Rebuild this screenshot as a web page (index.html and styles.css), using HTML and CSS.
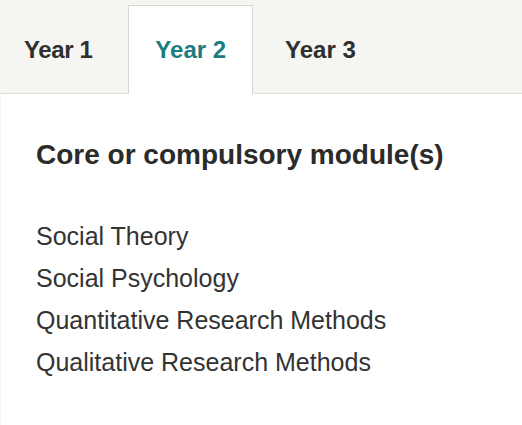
FILE: index.html
```html
<!DOCTYPE html>
<html lang="en">
<head>
<meta charset="utf-8">
<title>Modules</title>
<link rel="stylesheet" href="styles.css">
</head>
<body>
<div class="tabbar">
  <ul class="tabs">
    <li class="tab">Year 1</li>
    <li class="tab active">Year 2</li>
    <li class="tab">Year 3</li>
  </ul>
</div>
<div class="panel">
  <h2 class="heading">Core or compulsory module(s)</h2>
  <ul class="modules">
    <li>Social Theory</li>
    <li>Social Psychology</li>
    <li>Quantitative Research Methods</li>
    <li>Qualitative Research Methods</li>
  </ul>
</div>
</body>
</html>
```

FILE: styles.css
```css
html, body {
  margin: 0;
  padding: 0;
  background: #ffffff;
}
body {
  font-family: "Liberation Sans", Arial, Helvetica, sans-serif;
  color: #333333;
  width: 522px;
  height: 425px;
  overflow: hidden;
}
.tabbar {
  background: #f5f5f2;
  border-bottom: 1px solid #dcdcda;
  height: 93px;
}
.tabs {
  list-style: none;
  margin: 0;
  padding: 5px 0 0 0;
  display: flex;
  height: 88px;
}
.tab {
  display: flex;
  align-items: center;
  padding: 0 26px;
  margin-right: 6px;
  border: 1px solid transparent;
  border-bottom: 0;
  font-size: 24px;
  font-weight: bold;
  letter-spacing: 0;
  color: #2f2f2f;
  height: 88px;
  box-sizing: border-box;
}
.tab:first-child {
  padding-left: 23px;
  padding-right: 29px;
  letter-spacing: -0.4px;
}
.tab.active {
  background: #ffffff;
  border-color: #d6d6d4;
  color: #1b7d80;
  height: 89px;
  margin-bottom: -1px;
  margin-right: 5px;
}
.panel {
  padding: 0 35px;
  border-left: 1px solid #f6f6f4;
  height: 331px;
}
.heading {
  margin: 0;
  padding-top: 45px;
  font-size: 28px;
  line-height: 32px;
  font-weight: bold;
  color: #2b2b2b;
}
.modules {
  list-style: none;
  margin: 0;
  padding: 44px 0 0 0;
}
.modules li {
  font-size: 25px;
  line-height: 42px;
  color: #333333;
}
```
